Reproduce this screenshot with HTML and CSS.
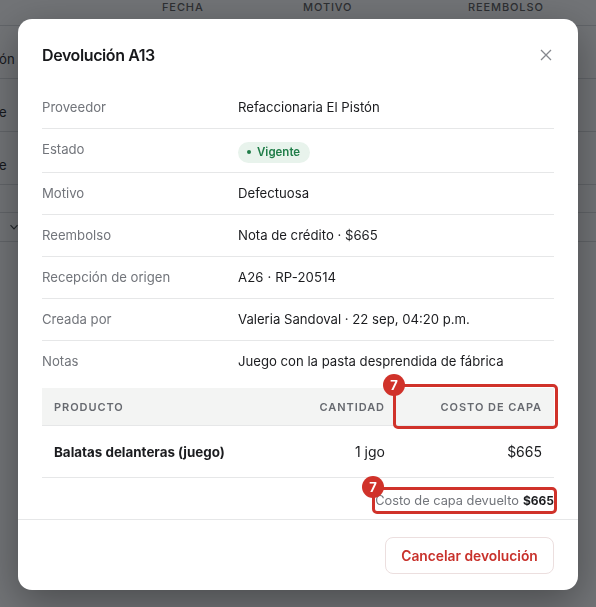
FILE: index.html
```html
<!DOCTYPE html>
<html lang="es">
<head>
  <meta charset="UTF-8">
  <meta name="viewport" content="width=device-width, initial-scale=1.0">
  <title>Devolución A13</title>
  <link rel="stylesheet" href="styles.css">
</head>
<body>

  <div class="page">
    <div class="page-head">
      <span class="col-fecha">FECHA</span>
      <span class="col-motivo">MOTIVO</span>
      <span class="col-reembolso">REEMBOLSO</span>
    </div>
    <div class="page-row">ón</div>
    <div class="page-row">e</div>
    <div class="page-row">e</div>
    <div class="page-pager">
      <svg width="10" height="10" viewBox="0 0 10 10"><path d="M1.5 3.2 5 6.8l3.5-3.6" fill="none" stroke="#3c3e42" stroke-width="1.2"/></svg>
    </div>
  </div>

  <div class="overlay"></div>

  <div class="modal">
    <div class="modal-head">
      <h2>Devolución A13</h2>
      <svg class="close" width="12" height="12" viewBox="0 0 12 12"><path d="M1 1l10 10M11 1 1 11" fill="none" stroke="#85888e" stroke-width="1.3"/></svg>
    </div>

    <div class="modal-body">
      <div class="info-row"><span class="info-label">Proveedor</span><span>Refaccionaria El Pistón</span></div>
      <div class="info-row row-tall"><span class="info-label">Estado</span><span class="badge"><i class="dot"></i>Vigente</span></div>
      <div class="info-row"><span class="info-label">Motivo</span><span>Defectuosa</span></div>
      <div class="info-row"><span class="info-label">Reembolso</span><span>Nota de crédito · $665</span></div>
      <div class="info-row"><span class="info-label">Recepción de origen</span><span class="code">A26 · RP-20514</span></div>
      <div class="info-row"><span class="info-label">Creada por</span><span>Valeria Sandoval · 22 sep, 04:20 p.m.</span></div>
      <div class="info-row no-line"><span class="info-label">Notas</span><span>Juego con la pasta desprendida de fábrica</span></div>

      <div class="table-head">
        <span class="cell-name">PRODUCTO</span>
        <span class="cell-qty">CANTIDAD</span>
        <span class="cell-cost">COSTO DE CAPA</span>
      </div>
      <div class="table-row">
        <span class="cell-name product">Balatas delanteras (juego)</span>
        <span class="cell-qty">1 jgo</span>
        <span class="cell-cost">$665</span>
      </div>
      <div class="total">Costo de capa devuelto <b>$665</b></div>
    </div>

    <div class="modal-foot">
      <button class="btn-cancel">Cancelar devolución</button>
    </div>

    <div class="mark mark-head"></div>
    <div class="pin pin-head">7</div>
    <div class="mark mark-total"></div>
    <div class="pin pin-total">7</div>
  </div>

</body>
</html>
```

FILE: styles.css
```css
* {
  box-sizing: border-box;
}

html, body {
  height: 100%;
}

body {
  margin: 0;
  overflow: hidden;
  font-family: Inter, "Liberation Sans", sans-serif;
  font-size: 13.15px;
  color: #1b1c1f;
  background: #fff;
}

.page-head {
  height: 26px;
  position: relative;
  border-bottom: 1px solid #d8d9db;
  font-size: 11px;
  font-weight: 500;
  letter-spacing: 0.08em;
  color: #555;
}

.page-head span {
  position: absolute;
  top: 0;
}

.col-fecha { left: 162px; }
.col-motivo { left: 303px; }
.col-reembolso { left: 468px; }

.page-row {
  height: 53px;
  padding-top: 14px;
  border-bottom: 1px solid #d8d9db;
  display: flex;
  align-items: center;
  margin-left: -1px;
}

.page-pager {
  height: 30px;
  margin-top: 27px;
  display: flex;
  align-items: center;
  padding-left: 9px;
  border-top: 1px solid #d8d9db;
  border-bottom: 1px solid #d8d9db;
}

.overlay {
  position: fixed;
  inset: 0;
  background: rgba(20, 23, 28, 0.6);
}

.modal {
  position: absolute;
  left: 18px;
  top: 19px;
  width: 560px;
  height: 571px;
  background: #fff;
  border-radius: 14px;
  box-shadow: 0 12px 40px rgba(0, 0, 0, 0.35);
}

.modal-head {
  height: 67px;
  padding: 4px 26px 0 24px;
  display: flex;
  align-items: center;
  justify-content: space-between;
}

.modal-head h2 {
  margin: 0;
  font-size: 16px;
  font-weight: 600;
  letter-spacing: -0.025em;
  color: #17181b;
}

.modal-body {
  padding: 0 24px;
  height: 434px;
  border-bottom: 1px solid #e6e7e8;
}

.info-row {
  height: 42px;
  padding-bottom: 1px;
  display: flex;
  align-items: center;
  border-bottom: 1px solid #e6e7e8;
}

.info-row:first-child {
  height: 43px;
  padding-bottom: 1px;
}

.info-row.row-tall {
  height: 44px;
  padding: 3px 0 0;
}

.row-tall .info-label {
  margin-bottom: 6px;
}

.info-row.no-line {
  border-bottom: none;
  height: 47px;
  padding-bottom: 7px;
}

.info-label {
  width: 196px;
  flex-shrink: 0;
  color: #72757b;
}

.code {
  letter-spacing: 0.01em;
}

.badge {
  display: inline-flex;
  align-items: center;
  gap: 6px;
  height: 21px;
  padding: 0 10px 0 9px;
  border-radius: 11px;
  background: #e8f3ec;
  color: #1f7d48;
  font-size: 11.5px;
  font-weight: 600;
}

.dot {
  width: 4px;
  height: 4px;
  border-radius: 50%;
  background: #1f7d48;
}

.table-head, .table-row {
  display: flex;
  align-items: center;
  padding: 0 12px;
  border-bottom: 1px solid #e6e7e8;
}

.table-head {
  height: 38px;
  background: #f3f4f3;
  font-size: 11px;
  font-weight: 600;
  letter-spacing: 0.085em;
  color: #66696f;
}

.table-row {
  height: 52px;
  font-size: 14px;
}

.cell-name { flex: 1; }
.cell-qty { width: 120px; text-align: right; }
.cell-cost { width: 157px; text-align: right; }

.table-row .product {
  font-size: 13.4px;
  font-weight: 700;
}

.total {
  height: 41px;
  padding-top: 4px;
  display: flex;
  align-items: center;
  justify-content: flex-end;
  gap: 4px;
  font-size: 12.8px;
  color: #72757b;
}

.total b {
  font-size: 12px;
  font-weight: 700;
  color: #1b1c1f;
}

.modal-foot {
  display: flex;
  justify-content: flex-end;
  padding: 17px 24px 0;
}

.btn-cancel {
  height: 37px;
  width: 169px;
  background: #fff;
  border: 1px solid #ecdfdf;
  border-radius: 8px;
  color: #c8312b;
  font-family: inherit;
  font-size: 13.8px;
  font-weight: 600;
}

.mark {
  position: absolute;
  border: 3px solid #d0322a;
  border-radius: 5px;
}

.mark-head {
  left: 375px;
  top: 365px;
  width: 165px;
  height: 45px;
}

.mark-total {
  left: 354px;
  top: 468px;
  width: 185px;
  height: 27px;
}

.pin {
  position: absolute;
  width: 22px;
  height: 22px;
  border-radius: 50%;
  background: #d0322a;
  color: #fff;
  font-size: 13px;
  font-weight: 700;
  display: flex;
  align-items: center;
  justify-content: center;
}

.pin-head {
  left: 365px;
  top: 355px;
}

.pin-total {
  left: 344px;
  top: 457px;
}
```
